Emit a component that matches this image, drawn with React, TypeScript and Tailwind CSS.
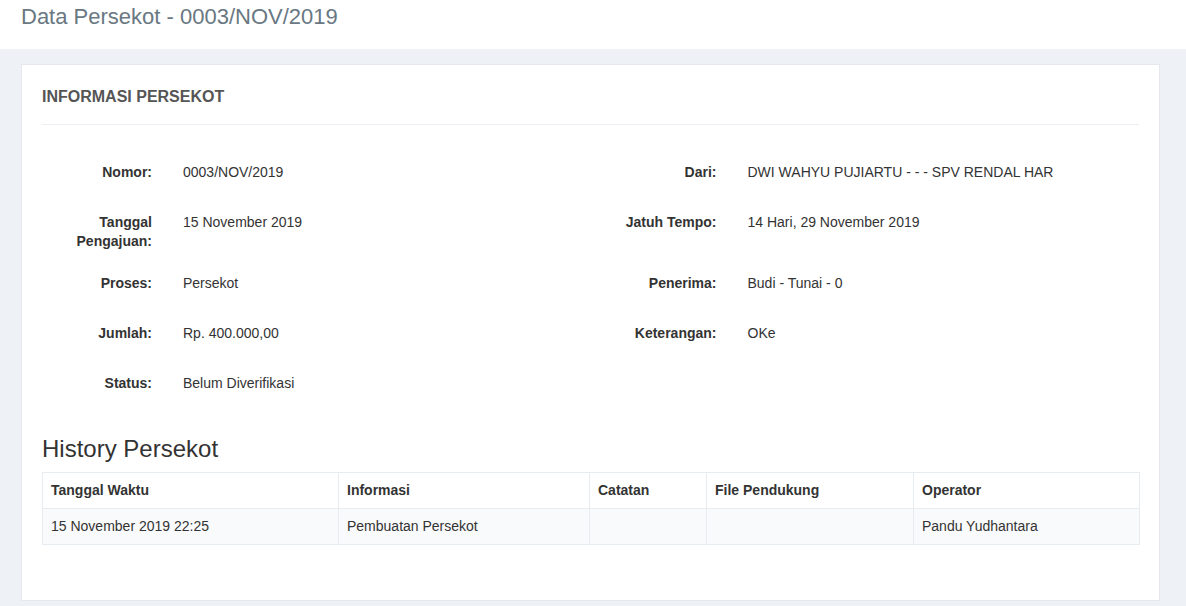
const leftRows = [
  { label: "Nomor:", value: "0003/NOV/2019" },
  { label: "Tanggal Pengajuan:", value: "15 November 2019" },
  { label: "Proses:", value: "Persekot" },
  { label: "Jumlah:", value: "Rp. 400.000,00" },
  { label: "Status:", value: "Belum Diverifikasi" },
];

const rightRows = [
  { label: "Dari:", value: "DWI WAHYU PUJIARTU - - - SPV RENDAL HAR" },
  { label: "Jatuh Tempo:", value: "14 Hari, 29 November 2019" },
  { label: "Penerima:", value: "Budi - Tunai - 0" },
  { label: "Keterangan:", value: "OKe" },
];

// tinggi tiap baris info (baris ke-2 labelnya dua baris)
const rowHeights = ["h-[50px]", "h-[61px]", "h-[50px]", "h-[50px]", "h-[50px]"];

const columns = [
  { title: "Tanggal Waktu", width: "w-[296px]" },
  { title: "Informasi", width: "w-[251px]" },
  { title: "Catatan", width: "w-[117px]" },
  { title: "File Pendukung", width: "w-[207px]" },
  { title: "Operator", width: "w-[226px]" },
];

const history = [
  ["15 November 2019 22:25", "Pembuatan Persekot", "", "", "Pandu Yudhantara"],
];

const InfoRow = ({
  label,
  value,
  labelWidth,
  height,
}: {
  label: string;
  value: string;
  labelWidth: string;
  height: string;
}) => (
  <div className={`flex pt-[7px] ${height}`}>
    <div
      className={`${labelWidth} mt-[1px] shrink-0 text-right font-bold leading-[19px] text-[#333]`}
    >
      {label}
    </div>
    <div className="ml-[31px] leading-[20px] text-[#333]">{value}</div>
  </div>
);

export default function App() {
  return (
    <div
      className="min-h-[606px] bg-[#eef1f5] text-[14px]"
      style={{ fontFamily: '"Liberation Sans", Arial, sans-serif' }}
    >
      {/* header */}
      <div className="h-[49px] bg-white pl-[21px] pt-[4px]">
        <h1 className="text-[22px] leading-[26px] text-[#697882]">
          Data Persekot - 0003/NOV/2019
        </h1>
      </div>

      {/* card */}
      <div className="ml-[21px] mt-[15px] w-[1139px] border border-[#e5e9ee] bg-white px-[20px] pt-[21px] pb-[55px]">
        <h2 className="text-[16px] font-bold leading-[22px] text-[#555]">
          INFORMASI PERSEKOT
        </h2>
        <div className="mt-[16px] border-t border-[#eceff3]"></div>

        {/* info */}
        <div className="mt-[30px] grid grid-cols-2">
          <div>
            {leftRows.map((row, i) => (
              <InfoRow
                key={row.label}
                label={row.label}
                value={row.value}
                labelWidth="w-[110px]"
                height={rowHeights[i]}
              />
            ))}
          </div>
          <div>
            {rightRows.map((row, i) => (
              <InfoRow
                key={row.label}
                label={row.label}
                value={row.value}
                labelWidth="w-[126px]"
                height={rowHeights[i]}
              />
            ))}
          </div>
        </div>

        {/* history */}
        <h3 className="mt-[20px] text-[24px] leading-[26px] text-[#333]">
          History Persekot
        </h3>
        <table className="mt-[10px] w-full table-fixed border-collapse border border-[#e7ecf1] text-[#333]">
          <thead>
            <tr>
              {columns.map((col) => (
                <th
                  key={col.title}
                  className={`${col.width} border border-[#e7ecf1] px-[8px] py-[8px] text-left font-bold leading-[19px]`}
                >
                  {col.title}
                </th>
              ))}
            </tr>
          </thead>
          <tbody>
            {history.map((row, i) => (
              <tr key={i} className="bg-[#f9fafc]">
                {row.map((cell, j) => (
                  <td
                    key={j}
                    className="border border-[#e7ecf1] px-[8px] py-[8px] leading-[19px]"
                  >
                    {cell}
                  </td>
                ))}
              </tr>
            ))}
          </tbody>
        </table>
      </div>
    </div>
  );
}
